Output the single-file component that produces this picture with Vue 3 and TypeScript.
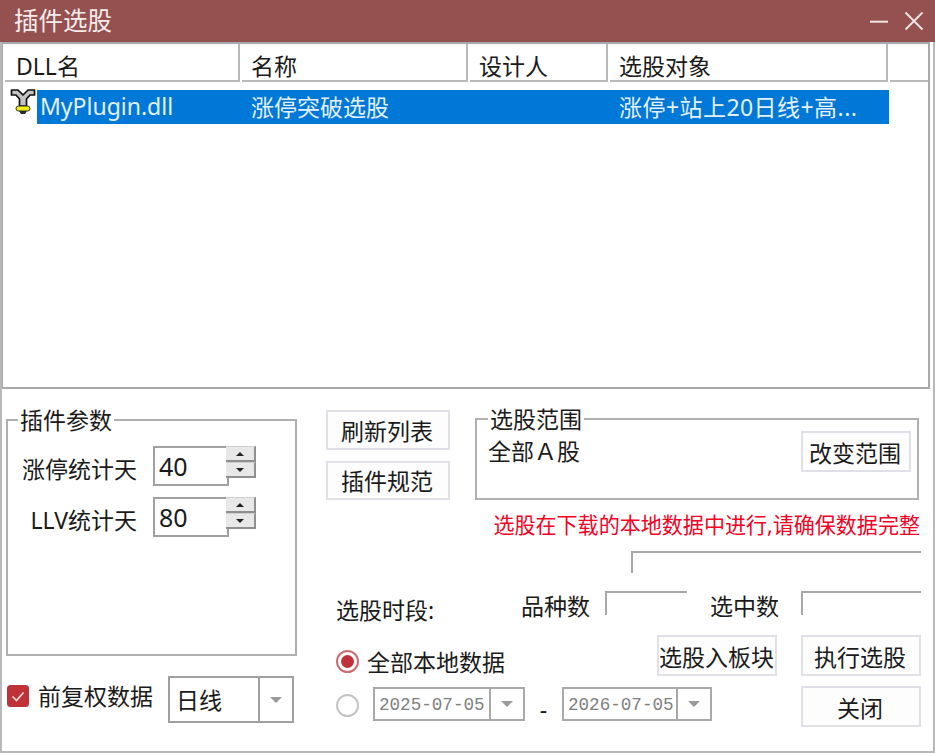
<script setup lang="ts">
interface Param { label: string; value: number }
const params: Param[] = [
  { label: '涨停统计天', value: 40 },
  { label: 'LLV统计天', value: 80 },
]
const columns = [
  { title: 'DLL名', width: 235 },
  { title: '名称', width: 226 },
  { title: '设计人', width: 138 },
  { title: '选股对象', width: 278 },
]
</script>

<template>
  <div class="win">
    <header class="titlebar">
      <span class="title">插件选股</span>
      <span class="winbtns">
        <svg width="20" height="20" viewBox="0 0 20 20"><path d="M1 10.7H19" stroke="#f3e6e6" stroke-width="2" /></svg>
        <svg width="20" height="20" viewBox="0 0 20 20"><path d="M1.5 1.5L18.5 18.5M18.5 1.5L1.5 18.5" stroke="#f3e6e6" stroke-width="1.8" /></svg>
      </span>
    </header>

    <div class="body">
      <section class="list">
        <div class="thead">
          <div v-for="c in columns" :key="c.title" class="th" :style="{ width: c.width + 'px' }">{{ c.title }}</div>
          <div class="th th-rest"></div>
        </div>
        <div class="row">
          <svg class="plug" width="26" height="26" viewBox="0 0 26 26">
            <path d="M1.5 2H8L13 7L18 2H24.5V7H20L16.5 11V18H9.5V11L6 7H1.5Z" fill="#c4c4c4" stroke="#111" stroke-width="1.7" stroke-linejoin="round" />
            <rect x="6" y="18" width="14" height="5" rx="2.5" fill="#eeee10" stroke="#333" stroke-width="1" />
            <path d="M9 23H17L15 26H11Z" fill="#2a2a2a" />
          </svg>
          <div class="row-sel">
            <span class="cell c1">MyPlugin.dll</span>
            <span class="cell c2">涨停突破选股</span>
            <span class="cell c3"></span>
            <span class="cell c4">涨停+站上20日线+高...</span>
          </div>
        </div>
      </section>

      <main class="lower">
        <div class="left">
          <fieldset class="group group-params">
            <legend>插件参数</legend>
            <div v-for="p in params" :key="p.label" class="param">
              <label class="param-label">{{ p.label }}</label>
              <div class="spin">
                <div class="spin-input">{{ p.value }}</div>
                <div class="spin-btns">
                  <span class="spin-btn"><i class="tri up"></i></span>
                  <span class="spin-btn"><i class="tri down"></i></span>
                </div>
              </div>
            </div>
          </fieldset>
          <div class="left-foot">
            <span class="check">
              <svg width="26" height="26" viewBox="0 0 26 26">
                <rect x="1" y="3" width="22" height="22" rx="3.5" fill="#bf3338" />
                <path d="M6.5 14.5L10.5 18.5L17.5 10.5" fill="none" stroke="#f4dcdc" stroke-width="1.7" />
              </svg>
              前复权数据
            </span>
            <div class="combo">
              <span class="combo-text">日线</span>
              <span class="combo-btn"><i class="tri down big"></i></span>
            </div>
          </div>
        </div>

        <div class="right">
          <div class="top-row">
            <div class="btn-col">
              <button class="btn btn-wide">刷新列表</button>
              <button class="btn btn-wide">插件规范</button>
            </div>
            <fieldset class="group group-range">
              <legend>选股范围</legend>
              <span class="range-text">全部Ａ股</span>
              <button class="btn btn-range">改变范围</button>
            </fieldset>
          </div>
          <p class="warn">选股在下载的本地数据中进行,请确保数据完整</p>
          <div class="path-box"></div>
          <div class="counts">
            <span class="period">选股时段:</span>
            <span class="count-label l1">品种数</span>
            <span class="count-box b1"></span>
            <span class="count-label l2">选中数</span>
            <span class="count-box b2"></span>
          </div>
          <div class="bottom">
            <div class="range-opts">
              <div class="radio-row">
                <span class="radio on"><i></i></span>
                <span class="radio-text">全部本地数据</span>
              </div>
              <div class="date-row">
                <span class="radio"></span>
                <div class="date">
                  <span class="date-text">2025-07-05</span>
                  <span class="date-btn"><i class="tri down big"></i></span>
                </div>
                <span class="dash">-</span>
                <div class="date date-2">
                  <span class="date-text">2026-07-05</span>
                  <span class="date-btn"><i class="tri down big"></i></span>
                </div>
              </div>
            </div>
            <div class="actions">
              <button class="btn btn-act">选股入板块</button>
              <button class="btn btn-act">执行选股</button>
              <button class="btn btn-act btn-close">关闭</button>
            </div>
          </div>
        </div>
      </main>
    </div>
  </div>
</template>

<style>
html, body { margin: 0; background: #fff; overflow: hidden; }
</style>

<style scoped>
.win {
  width: 935px; height: 753px; box-sizing: border-box; display: flex; flex-direction: column;
  font-family: "Noto Sans", "Noto Sans CJK SC", sans-serif; font-size: 23px; color: #1a1a1a;
  background: #fff; overflow: hidden;
}
.titlebar {
  height: 42px; flex: none; background: #955050; color: #f6ecec; display: flex; align-items: center;
  justify-content: space-between; padding: 0 11px 0 14px; font-size: 24.5px;
}
.title { line-height: 42px; }
.winbtns { display: flex; gap: 15px; align-items: center; }
.winbtns svg { display: block; }
.body {
  flex: 1; min-height: 0; display: flex; flex-direction: column; box-sizing: border-box;
  border: 2px solid #b8b8b8; border-top: 0;
}
.list {
  height: 347px; flex: none; box-sizing: border-box; margin-right: 3px;
  border: 2px solid #a8a8a8; border-left-width: 1px; background: #fff;
}
.thead { display: flex; height: 39px; padding-left: 2px; }
.th {
  box-sizing: border-box; height: 38px; padding-left: 9px; line-height: 44px; margin-right: 2px;
  border-right: 2px solid #b8b8b8; border-bottom: 2px solid #b8b8b8; flex: none; white-space: nowrap;
}
.th:first-child { padding-left: 11px; }
.th-rest { border-right: none; width: 38px; padding: 0; margin: 0; }
.row { display: flex; margin-top: 7px; }
.plug { flex: none; margin: -2px 1px 0 7px; }
.row-sel { display: flex; width: 852px; height: 34px; background: #0078d7; color: #e4f1fb; align-items: center; padding-bottom: 3px; box-sizing: border-box; }
.cell { display: block; flex: none; white-space: nowrap; }
.c1 { width: 214px; padding-left: 3px; box-sizing: border-box; }
.c2 { width: 228px; }
.c3 { width: 140px; }
.c4 { width: 260px; letter-spacing: .45px; }
.lower { flex: 1; display: flex; min-height: 0; }
.left { width: 324px; flex: none; box-sizing: border-box; padding: 0 0 0 4px; display: flex; flex-direction: column; }
.group { margin: 0; border: 2px solid #b0b0b0; padding: 0; min-width: 0; box-sizing: border-box; }
.group legend { padding: 0 2px; margin-left: 10px; line-height: 30px; font-size: 23px; }
.group-params { width: 291px; height: 251px; margin-top: 16px; padding-top: 9px; }
.param { display: flex; align-items: flex-start; height: 51px; }
.param-label { width: 129px; flex: none; text-align: right; line-height: 38px; white-space: nowrap; margin-top: 6px; }
.spin { display: flex; margin-left: 16px; margin-top: 2px; }
.spin-input {
  box-sizing: border-box; width: 76px; height: 40px; border: 2px solid #a0a0a0; padding-left: 4px;
  line-height: 36px; font-size: 25px;
}
.spin-btns { display: flex; flex-direction: column; width: 30px; margin-left: -3px; height: 32px; position: relative; }
.spin-btn {
  height: 16px; box-sizing: border-box; background: #e8e8e8; display: flex; align-items: center; justify-content: center;
  border-bottom: 2px solid #8f8f8f; border-right: 2px solid #8f8f8f; border-top: 1px solid #cfcfcf;
}
.tri { display: block; width: 0; height: 0; border-left: 4px solid transparent; border-right: 4px solid transparent; }
.tri.up { border-bottom: 4px solid #222; }
.tri.down { border-top: 4px solid #222; }
.tri.big { border-left-width: 6px; border-right-width: 6px; border-top: 6px solid #9a9a9a; }
.left-foot { display: flex; align-items: center; margin-top: 20px; }
.check { display: flex; align-items: center; gap: 10px; width: 162px; flex: none; margin-top: -10px; white-space: nowrap; }
.check svg { flex: none; margin-right: -4px; }
.combo { display: flex; width: 126px; height: 47px; box-sizing: border-box; border: 2px solid #a0a0a0; }
.combo-text { flex: 1; padding-left: 6px; line-height: 45px; }
.combo-btn { width: 32px; border-left: 2px solid #a0a0a0; display: flex; align-items: center; justify-content: center; }
.right { width: 595px; flex: none; display: flex; flex-direction: column; }
.top-row { display: flex; margin-top: 21px; height: 90px; }
.btn-col { display: flex; flex-direction: column; gap: 11px; width: 149px; flex: none; }
.btn {
  box-sizing: border-box; background: #fdfdfd; border: 2px solid #dfe1e6; padding: 0 2px 0 0; margin: 0;
  font: inherit; color: inherit; white-space: nowrap;
}
.btn-wide { width: 124px; height: 40px; }
.group-range {
  width: 444px; height: 96px; margin-top: -6px; flex: none; display: flex; justify-content: space-between;
  align-items: flex-start; padding: 0 6px 0 11px;
}
.group-range legend { margin-left: 0; }
.range-text { line-height: 30px; margin-top: 2px; }
.btn-range { width: 110px; height: 41px; margin-top: -3px; }
.warn { margin: 10px 0 0; width: 594px; text-align: right; color: #f5001f; font-size: 21.05px; line-height: 30px; white-space: nowrap; }
.path-box { width: 290px; height: 22px; margin: 11px 0 0 305px; box-sizing: border-box; border-top: 2px solid #a8a8a8; border-left: 2px solid #a8a8a8; }
.counts { display: flex; margin-top: 18px; height: 44px; align-items: flex-start; }
.period { width: 196px; padding-left: 10px; box-sizing: border-box; margin-top: 4px; line-height: 30px; flex: none; }
.count-label { flex: none; line-height: 30px; margin-left: -1px; margin-right: 1px; }
.l1 { width: 83px; }
.l2 { width: 90px; }
.count-box { box-sizing: border-box; height: 24px; border-top: 2px solid #a8a8a8; border-left: 2px solid #a8a8a8; flex: none; }
.b1 { width: 82px; margin-right: 24px; }
.b2 { width: 120px; }
.bottom { flex: 1; display: flex; }
.range-opts { width: 331px; flex: none; box-sizing: border-box; padding-left: 10px; }
.radio-row { display: flex; align-items: center; margin-top: 11px; height: 30px; gap: 8px; }
.radio { box-sizing: border-box; width: 23px; height: 23px; border: 2px solid #c4c4c4; border-radius: 50%; display: flex; align-items: center; justify-content: center; flex: none; }
.radio.on { border-color: #cd6b70; }
.radio.on i { width: 13px; height: 13px; background: #bf3338; border-radius: 50%; display: block; }
.date-row { display: flex; align-items: center; margin-top: 11px; height: 34px; }
.date { display: flex; width: 152px; height: 34px; box-sizing: border-box; border: 2px solid #a8a8a8; flex: none; }
.date-2 { width: 150px; }
.date-row .radio { margin-right: 14px; margin-top: 3px; }
.date-text { flex: 1; padding-left: 4px; font-family: "Liberation Mono", monospace; font-size: 17.6px; line-height: 33px; color: #808080; white-space: nowrap; }
.date-btn { width: 32px; flex: none; border-left: 2px solid #a8a8a8; display: flex; align-items: center; justify-content: center; }
.dash { width: 37px; text-align: center; margin-top: 10px; flex: none; }
.actions { width: 264px; flex: none; display: grid; grid-template-columns: 120px 120px; grid-auto-rows: 41px; column-gap: 24px; row-gap: 10px; }
.btn-act { height: 41px; }
.btn-close { grid-column: 2; }
</style>
